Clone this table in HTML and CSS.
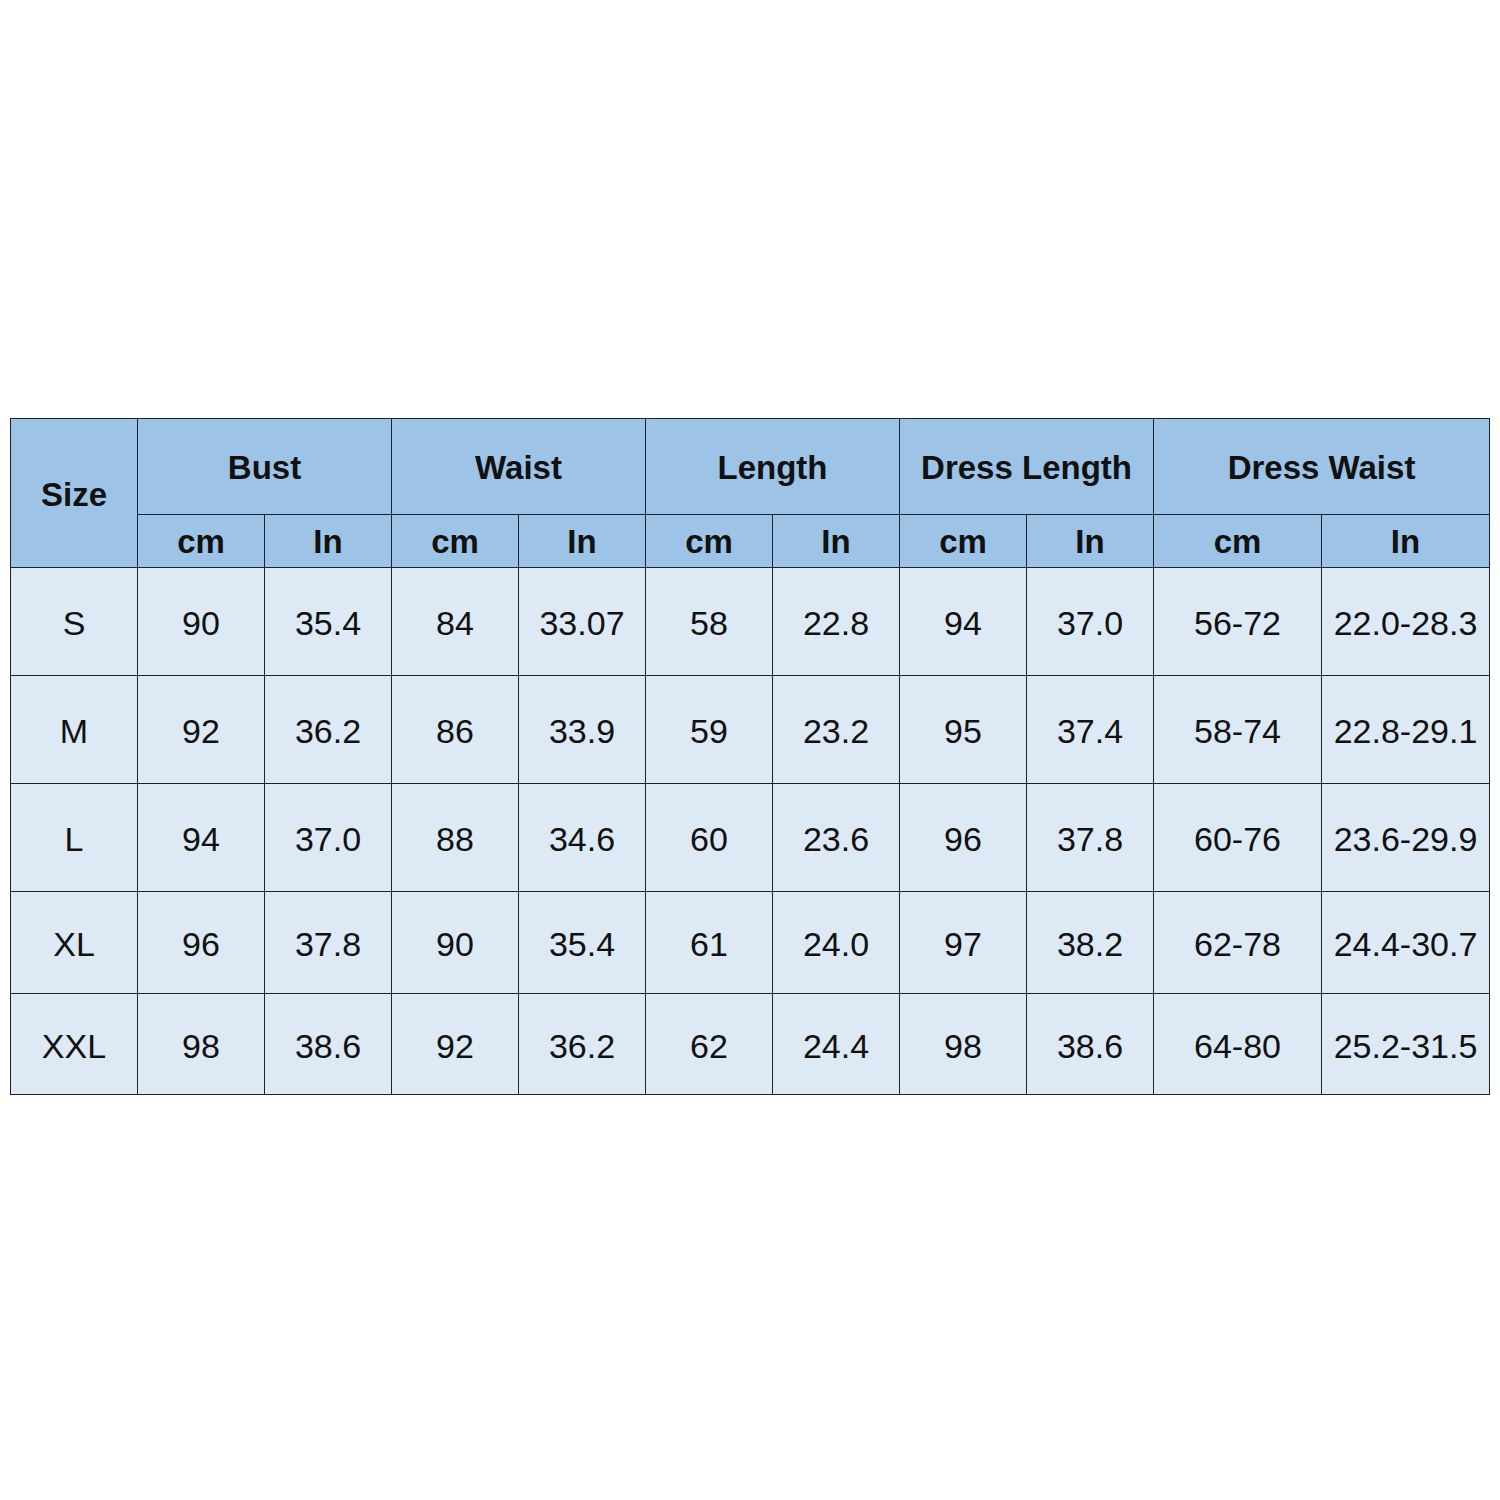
FILE: index.html
```html
<!DOCTYPE html>
<html>
<head>
<meta charset="utf-8">
<link rel="stylesheet" href="styles.css">
</head>
<body>
<div class="page">
<table class="chart">
  <colgroup>
    <col class="c-std"><col class="c-std"><col class="c-std"><col class="c-std"><col class="c-std"><col class="c-std"><col class="c-std"><col class="c-std"><col class="c-std"><col class="c-wide"><col class="c-wide">
  </colgroup>
  <thead>
    <tr class="h1">
      <th rowspan="2" class="size-head">Size</th>
      <th colspan="2">Bust</th>
      <th colspan="2">Waist</th>
      <th colspan="2">Length</th>
      <th colspan="2">Dress Length</th>
      <th colspan="2">Dress Waist</th>
    </tr>
    <tr class="h2">
      <th>cm</th><th>In</th><th>cm</th><th>In</th><th>cm</th><th>In</th><th>cm</th><th>In</th><th>cm</th><th>In</th>
    </tr>
  </thead>
  <tbody>
    <tr class="r-tall"><td>S</td><td>90</td><td>35.4</td><td>84</td><td>33.07</td><td>58</td><td>22.8</td><td>94</td><td>37.0</td><td>56-72</td><td>22.0-28.3</td></tr>
    <tr class="r-tall"><td>M</td><td>92</td><td>36.2</td><td>86</td><td>33.9</td><td>59</td><td>23.2</td><td>95</td><td>37.4</td><td>58-74</td><td>22.8-29.1</td></tr>
    <tr class="r-tall"><td>L</td><td>94</td><td>37.0</td><td>88</td><td>34.6</td><td>60</td><td>23.6</td><td>96</td><td>37.8</td><td>60-76</td><td>23.6-29.9</td></tr>
    <tr class="r-short"><td>XL</td><td>96</td><td>37.8</td><td>90</td><td>35.4</td><td>61</td><td>24.0</td><td>97</td><td>38.2</td><td>62-78</td><td>24.4-30.7</td></tr>
    <tr class="r-last"><td>XXL</td><td>98</td><td>38.6</td><td>92</td><td>36.2</td><td>62</td><td>24.4</td><td>98</td><td>38.6</td><td>64-80</td><td>25.2-31.5</td></tr>
  </tbody>
</table>
</div>
</body>
</html>
```

FILE: styles.css
```css
html, body {
  margin: 0;
  padding: 0;
  background: #ffffff;
}

.page {
  padding: 418px 0 0 10px;
}

.chart {
  border-collapse: collapse;
  table-layout: fixed;
  width: 1480px;
  font-family: "Liberation Sans", Arial, sans-serif;
  color: #111111;
}

.c-std { width: 127px; }
.c-wide { width: 168px; }

.chart th,
.chart td {
  border: 1px solid #1a2430;
  text-align: center;
  vertical-align: middle;
  padding: 0;
  white-space: nowrap;
}

.chart th {
  background: #9dc3e6;
  font-weight: bold;
  font-size: 33px;
}

.chart td {
  background: #dde9f5;
  font-size: 34px;
  font-weight: normal;
  padding-top: 4px;
}

.h1 th { height: 93px; padding-top: 2px; }
.h1 .size-head { padding-top: 4px; }
.h2 th { height: 50px; padding-top: 2px; }

.r-tall td { height: 103px; }
.r-short td { height: 97px; }
.r-last td { height: 96px; }
```
